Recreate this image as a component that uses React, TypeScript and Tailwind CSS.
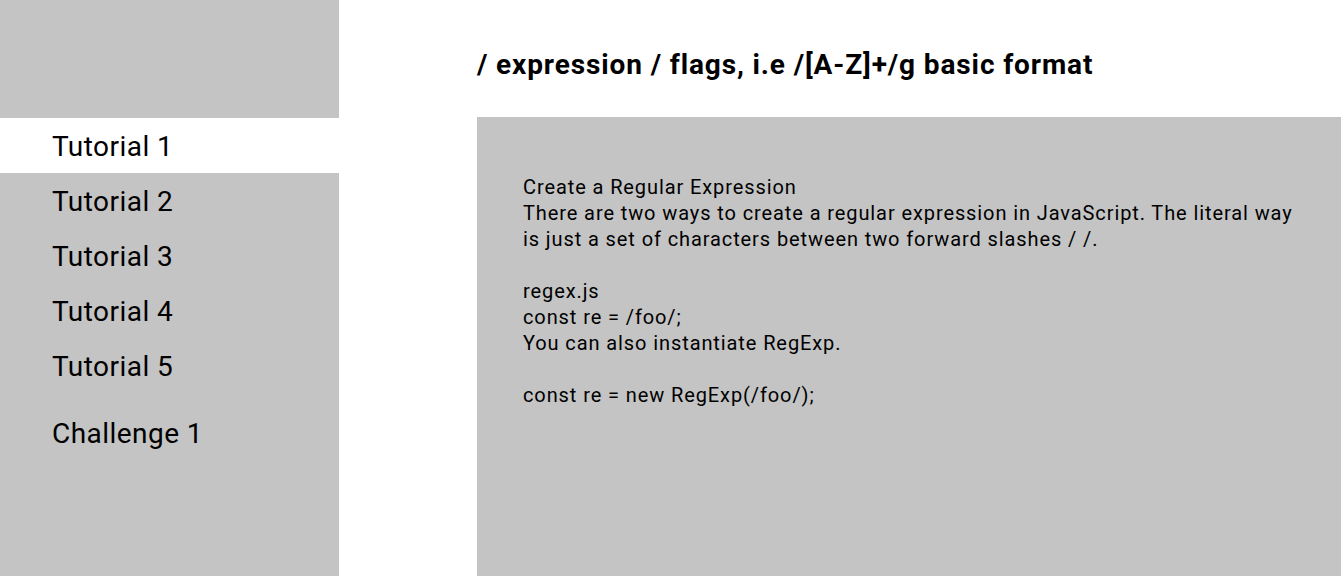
import React from "react";

export default function App() {
  const items = ["Tutorial 1", "Tutorial 2", "Tutorial 3", "Tutorial 4", "Tutorial 5"];
  return (
    <div
      className="flex h-[576px] w-full overflow-hidden bg-white text-black"
      style={{ fontFamily: "Roboto, 'Noto Sans', sans-serif" }}
    >
      <aside className="flex w-[339px] shrink-0 flex-col bg-[#c4c4c4]">
        <div className="h-[118px]" />
        {items.map((t, i) => (
          <div
            key={t}
            className={`flex h-[55px] items-center pl-[52px] pt-[2px] text-[28px] leading-none tracking-[0.45px] ${i === 0 ? "bg-white" : ""}`}
          >
            {t}
          </div>
        ))}
        <div className="mt-[12px] flex h-[55px] items-center pl-[52px] pt-[2px] text-[28px] leading-none tracking-[0.45px]">
          Challenge 1
        </div>
      </aside>
      <main className="flex min-w-0 flex-1 flex-col pl-[138px]">
        <h1 className="flex h-[117px] items-center pt-[13px] text-[28px] font-bold leading-none tracking-[0.88px]">
          / expression / flags, i.e /[A-Z]+/g basic format
        </h1>
        <div className="flex-1 bg-[#c4c4c4] pl-[46px] pr-[46px] pt-[57px] text-[20px] leading-[26px] tracking-[0.9px]">
          <p>Create a Regular Expression</p>
          <p>
            There are two ways to create a regular expression in JavaScript. The literal way is just a set of
            characters between two forward slashes / /.
          </p>
          <p>&nbsp;</p>
          <p>regex.js</p>
          <p>const re = /foo/;</p>
          <p>You can also instantiate RegExp.</p>
          <p>&nbsp;</p>
          <p>const re = new RegExp(/foo/);</p>
        </div>
      </main>
    </div>
  );
}
